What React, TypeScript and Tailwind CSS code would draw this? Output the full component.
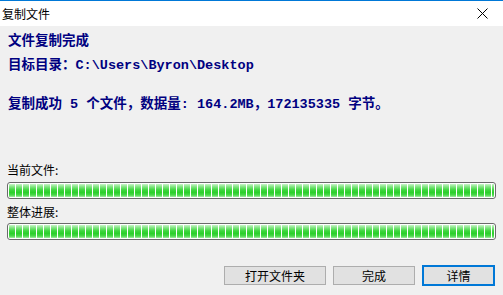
import React from "react";

const segs = Array.from({ length: 70 }, (_, i) => i);

function Bar() {
  return (
    <div className="mx-[7px] h-[17px] rounded-[3px] border border-[#6a6a6a] bg-white p-px overflow-hidden">
      <div className="flex h-full gap-px overflow-hidden">
        {segs.map((i) => (
          <div
            key={i}
            className="h-full w-[6px] shrink-0 bg-[linear-gradient(to_bottom,#c8f4c8_0%,#86e686_20%,#3fd63f_45%,#2ccf2c_65%,#4ad84a_85%,#a6eca6_100%)]"
          />
        ))}
      </div>
    </div>
  );
}

export default function App() {
  const navy = "text-[#000080] font-bold text-[13.5px] [font-family:'Liberation_Mono','Noto_Sans_CJK_SC',monospace]";
  const cjk = "[font-family:'Noto_Sans_CJK_SC',sans-serif]";
  return (
    <div className="w-[503px] h-[295px] overflow-hidden bg-[#f0f0f0] flex flex-col">
      <div className="h-[26px] bg-white border-t border-[#0078d7] flex items-center justify-between shrink-0">
        <span className={`pl-[2px] text-[12px] leading-none text-black ${cjk}`}>复制文件</span>
        <svg width="11" height="11" viewBox="0 0 11 11" className="mr-[15px]">
          <path d="M0.5 0.5 L10.5 10.5 M10.5 0.5 L0.5 10.5" stroke="#000" strokeWidth="1" />
        </svg>
      </div>
      <div className="flex flex-col pt-[4px]">
        <div className={`h-[24px] leading-[24px] pl-[8px] ${navy}`}>文件复制完成</div>
        <div className={`h-[24px] leading-[24px] pl-[8px] ${navy}`}>目标目录：C:\Users\Byron\Desktop</div>
        <div className={`mt-[15px] h-[24px] leading-[24px] pl-[8px] whitespace-pre ${navy}`}>
          复制成功 5 个文件，数据量: 164.2MB，172135335 字节。
        </div>
        <div className={`mt-[43px] h-[20px] leading-[20px] pl-[7px] text-[12px] text-black ${cjk}`}>当前文件:</div>
        <div className="mt-[2px]">
          <Bar />
        </div>
        <div className={`mt-[3px] h-[20px] leading-[20px] pl-[7px] text-[12px] text-black ${cjk}`}>整体进展:</div>
        <div className="mt-[1px]">
          <Bar />
        </div>
        <div className="mt-[25px] flex items-center justify-end gap-[7px] pr-[8px]">
          <button className={`h-[19px] w-[102px] border border-[#adadad] bg-[#e1e1e1] text-[12px] leading-none text-black ${cjk}`}>
            打开文件夹
          </button>
          <button className={`h-[19px] w-[82px] border border-[#adadad] bg-[#e1e1e1] text-[12px] leading-none text-black ${cjk}`}>
            完成
          </button>
          <button className={`h-[21px] w-[73px] border-2 border-[#0078d7] bg-[#e1e1e1] text-[12px] leading-none text-black ${cjk}`}>
            详情
          </button>
        </div>
      </div>
    </div>
  );
}
